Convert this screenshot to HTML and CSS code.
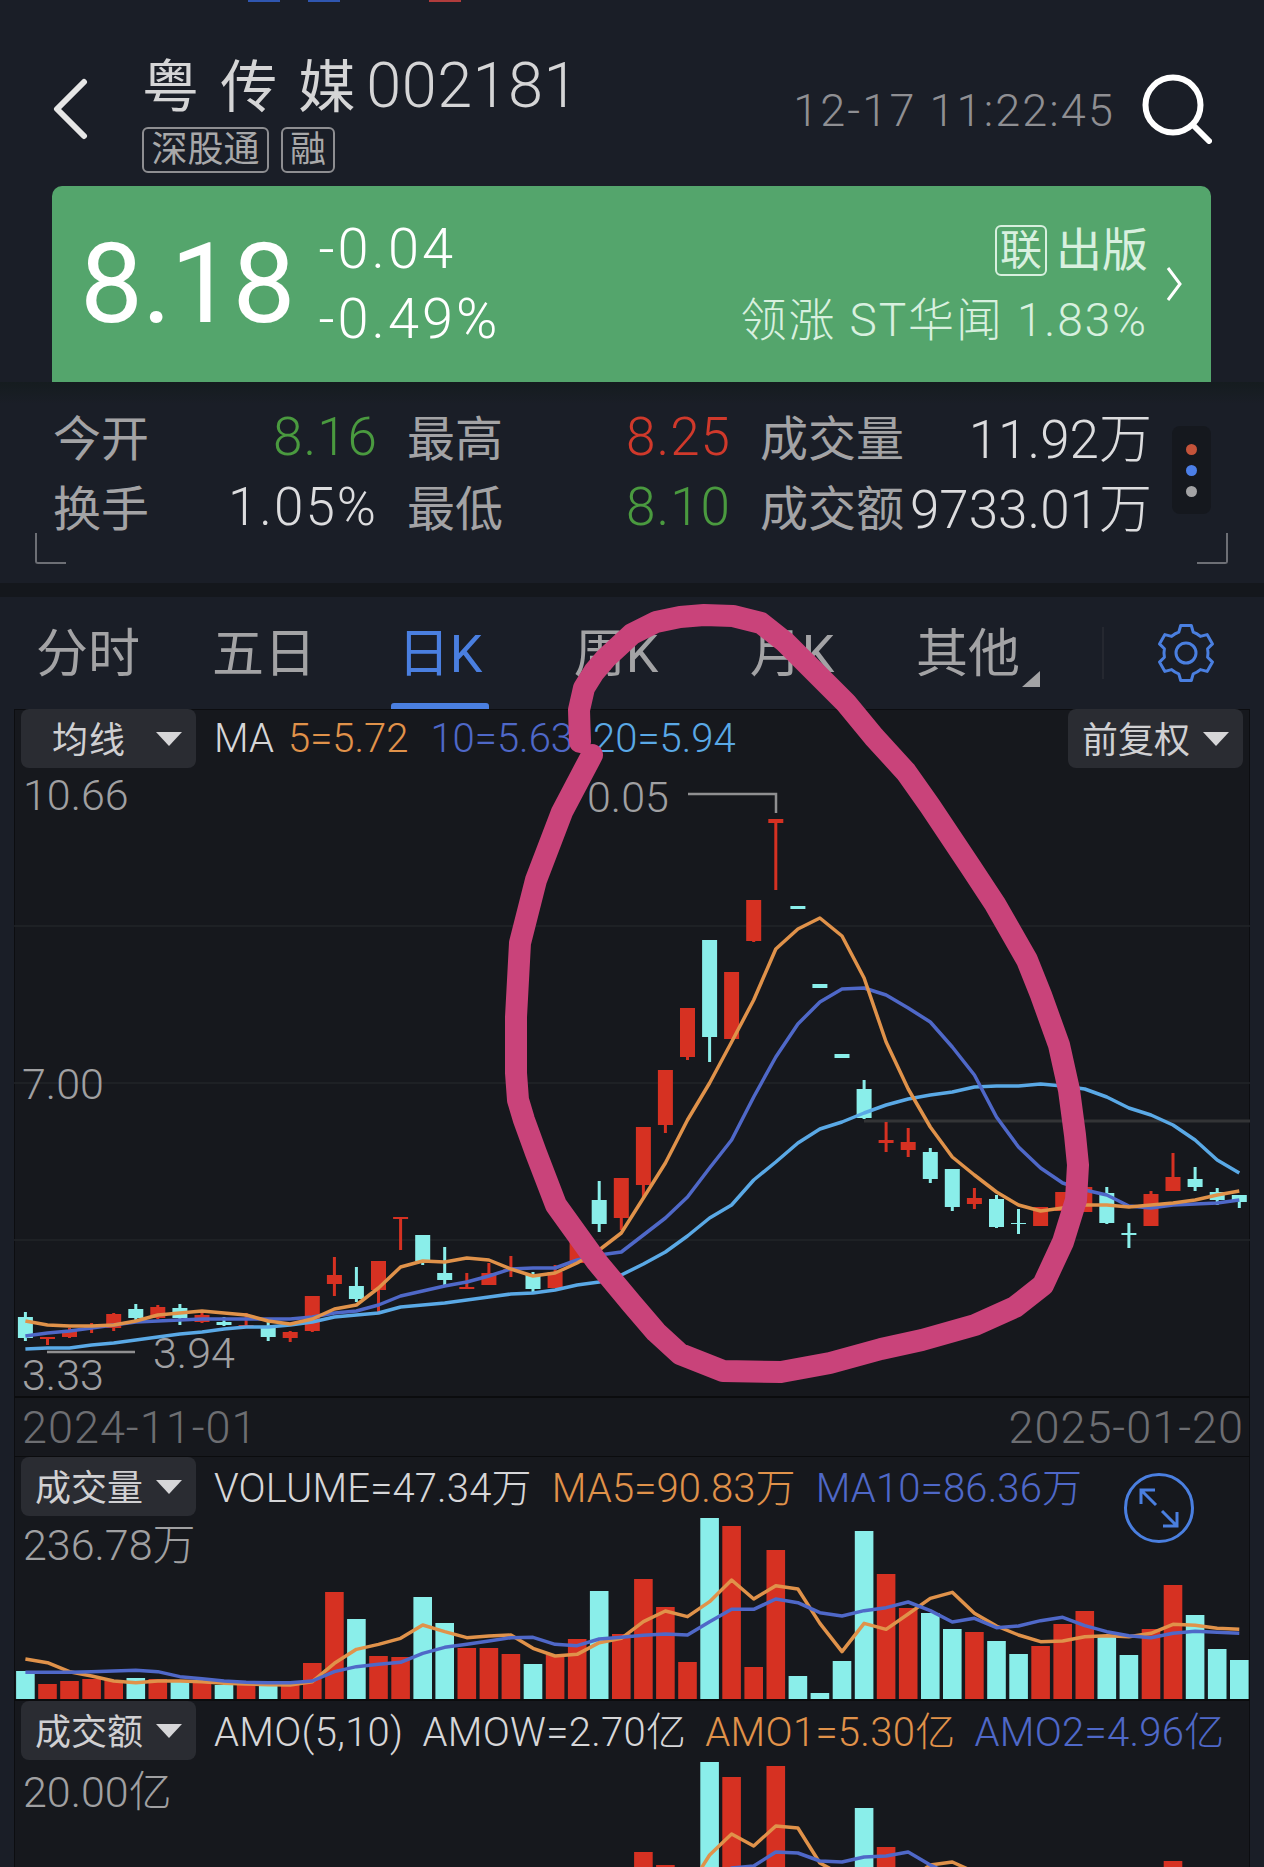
FILE: index.html
```html
<!DOCTYPE html>
<html lang="zh-CN">
<head>
    <meta charset="UTF-8">
    <meta name="viewport" content="width=device-width, initial-scale=1.0">
    <title>粤传媒 002181</title>
    <link rel="stylesheet" href="styles.css">
</head>
<body>
<div class="page">

    <div class="sliver">
        <span class="sliver-blue"></span>
        <span class="sliver-blue"></span>
        <span class="sliver-red"></span>
    </div>

    <header class="topbar">
        <svg class="back-icon" width="35" height="62" viewBox="0 0 35 62">
            <path d="M31 4 L4 31 L31 58"/>
        </svg>
        <div class="title-block">
            <h1 class="title">粤 传 媒<span class="code">002181</span></h1>
            <div class="tags">
                <span class="tag tag-wide">深股通</span>
                <span class="tag">融</span>
            </div>
        </div>
        <div class="time">12-17 11:22:45</div>
        <svg class="search-icon" width="70" height="70" viewBox="0 0 70 70">
            <circle cx="31" cy="31" r="27.5"/>
            <path d="M51 51 L67 67"/>
        </svg>
    </header>

    <section class="quote-card">
        <div class="price">8.18</div>
        <div class="change">
            <div>-0.04</div>
            <div>-0.49%</div>
        </div>
        <div class="sector">
            <div class="sector-name"><span class="sector-tag">联</span>出版</div>
            <div class="sector-lead">领涨 ST华闻 1.83%</div>
        </div>
        <svg class="card-arrow" width="16" height="34" viewBox="0 0 16 34">
            <path d="M2 1 L14 17 L2 33"/>
        </svg>
    </section>

    <section class="stats">
        <div class="stats-grid">
            <div class="stat"><span class="stat-label">今开</span><span class="stat-value green">8.16</span></div>
            <div class="stat"><span class="stat-label">最高</span><span class="stat-value red">8.25</span></div>
            <div class="stat"><span class="stat-label">成交量</span><span class="stat-value stat-cjk">11.92万</span></div>
            <div class="stat"><span class="stat-label">换手</span><span class="stat-value stat-wide">1.05%</span></div>
            <div class="stat"><span class="stat-label">最低</span><span class="stat-value green">8.10</span></div>
            <div class="stat"><span class="stat-label">成交额</span><span class="stat-value stat-cjk">9733.01万</span></div>
        </div>
        <div class="page-dots">
            <span class="dot dot-red"></span>
            <span class="dot dot-blue"></span>
            <span class="dot dot-gray"></span>
        </div>
        <span class="corner corner-left"></span>
        <span class="corner corner-right"></span>
    </section>

    <nav class="tabs">
        <a class="tab">分时</a>
        <a class="tab">五日</a>
        <a class="tab tab-active">日K</a>
        <a class="tab">周K</a>
        <a class="tab">月K</a>
        <a class="tab tab-more">其他</a>
        <span class="tabs-divider"></span>
        <svg class="gear-icon" width="60" height="60" viewBox="-30 -30 60 60">
            <path d="M-5.3 -27.5 L5.3 -27.5 L7.2 -20.8 A22 22 0 0 1 14.4 -16.6 L21.1 -18.4 L26.5 -9.1 L21.6 -4.2 A22 22 0 0 1 21.6 4.2 L26.5 9.1 L21.1 18.4 L14.4 16.6 A22 22 0 0 1 7.2 20.8 L5.3 27.5 L-5.3 27.5 L-7.2 20.8 A22 22 0 0 1 -14.4 16.6 L-21.1 18.4 L-26.5 9.1 L-21.6 4.2 A22 22 0 0 1 -21.6 -4.2 L-26.5 -9.1 L-21.1 -18.4 L-14.4 -16.6 A22 22 0 0 1 -7.2 -20.8 Z"/>
            <circle r="10"/>
        </svg>
    </nav>

    <main class="chart-panel">
        <!-- viewBox uses page coordinates so the values read straight off the screen -->
        <svg class="chart-canvas" width="1236" height="1158" viewBox="14 709 1236 1158">
            <g class="grid-lines">
                <line x1="14" x2="1250" y1="926" y2="926"/>
                <line x1="14" x2="1250" y1="1083" y2="1083"/>
                <line x1="14" x2="1250" y1="1240" y2="1240"/>
            </g>
            <line class="price-line" x1="864" x2="1250" y1="1121" y2="1121"/>
            <g id="volume-bars"></g>
            <g id="amount-bars"></g>
            <g id="candles"></g>
            <g id="ma-lines"></g>
            <path class="extreme-line" d="M688 794 H776 V813"/>
            <path class="extreme-line" d="M47 1352 H135"/>
            <text class="axis-label" x="23" y="810">10.66</text>
            <text class="axis-label" x="587" y="812">0.05</text>
            <text class="axis-label" x="22" y="1099">7.00</text>
            <text class="axis-label" x="153" y="1368">3.94</text>
            <text class="axis-label" x="22" y="1390">3.33</text>
            <text class="axis-label" x="23" y="1560">236.78万</text>
            <text class="axis-label" x="23" y="1807">20.00亿</text>
        </svg>

        <section class="kline-pane">
            <div class="tool-row">
                <div class="dropdown"><span class="dropdown-text dropdown-short">均线</span><i class="caret"></i></div>
                <div class="legend">
                    <span>MA</span>
                    <span class="c-orange">5=5.72</span>
                    <span class="c-blue gap-wide">10=5.63</span>
                    <span class="c-sky gap-last">20=5.94</span>
                </div>
                <div class="dropdown dropdown-right"><span class="dropdown-text">前复权</span><i class="caret"></i></div>
            </div>
        </section>

        <div class="date-row">
            <span>2024-11-01</span>
            <span>2025-01-20</span>
        </div>

        <section class="volume-pane">
            <div class="tool-row">
                <div class="dropdown"><span class="dropdown-text">成交量</span><i class="caret"></i></div>
                <div class="legend legend-wide">
                    <span>VOLUME=47.34万</span>
                    <span class="c-orange">MA5=90.83万</span>
                    <span class="c-blue">MA10=86.36万</span>
                </div>
                <svg class="expand-icon" width="72" height="72" viewBox="-36 -36 72 72">
                    <circle r="33.5"/>
                    <path d="M-18 -18 L-3 -3 M3 3 L18 18 M-18 -4 V-18 H-4 M18 4 V18 H4"/>
                </svg>
            </div>
        </section>

        <section class="amount-pane">
            <div class="tool-row">
                <div class="dropdown"><span class="dropdown-text">成交额</span><i class="caret"></i></div>
                <div class="legend legend-amo">
                    <span>AMO(5,10)</span>
                    <span>AMOW=2.70亿</span>
                    <span class="c-orange">AMO1=5.30亿</span>
                    <span class="c-blue">AMO2=4.96亿</span>
                </div>
            </div>
        </section>
    </main>

    <svg class="scribble" width="1264" height="1867" viewBox="0 0 1264 1867">
        <path d="M580 742 L579 710 L584 688 L594 672 L606 658 L632 634 L656 622 L680 617 L704 615 L733 616 L761 623 L785 642 L813 670 L846 703 L874 737 L906 772 L930 806 L970 866 L995 904 L1027 960 L1041 995 L1059 1045 L1069 1090 L1075 1135 L1078 1165 L1076 1200 L1063 1242 L1043 1285 L1015 1307 L975 1325 L922 1340 L881 1349 L830 1363 L781 1372 L723 1371 L680 1354 L656 1332 L632 1304 L597 1262 L556 1205 L536 1153 L524 1120 L518 1100 L516 1073 L516 1017 L520 943 L536 880 L562 812 L592 755"/>
    </svg>
</div>
<script src="script.js"></script>
</body>
</html>
```

FILE: styles.css
```css
* {
    box-sizing: border-box;
}
html, body {
    margin: 0;
    padding: 0;
}
body {
    background: #1a1e27;
    font-family: Roboto, "Noto Sans CJK SC", sans-serif;
    font-weight: 300;
    color: #dcdcde;
}
.page {
    position: relative;
    width: 1264px;
    height: 1867px;
    overflow: hidden;
}

/* top edge */
.sliver {
    display: flex;
    height: 2px;
    padding-left: 248px;
}
.sliver span {
    width: 32px;
    margin-right: 28px;
}
.sliver-blue {
    background: #2f56b0;
}
.sliver-red {
    margin-left: 61px;
    background: #b03c3c;
}

/* header */
.topbar {
    display: flex;
    align-items: flex-start;
    height: 184px;
}
.back-icon {
    margin: 76px 0 0 53px;
    flex: none;
}
.back-icon path {
    fill: none;
    stroke: #e6e6e6;
    stroke-width: 6;
    stroke-linecap: round;
    stroke-linejoin: round;
}
.title-block {
    margin-left: 54px;
}
.title {
    margin: 50px 0 0;
    height: 67px;
    line-height: 68px;
    font-size: 57px;
    font-weight: 400;
    word-spacing: 7px;
    color: #d5d5d6;
    white-space: nowrap;
}
.code {
    font-size: 63px;
    font-weight: 300;
    letter-spacing: 0.5px;
    margin-left: 11px;
}
.tags {
    display: flex;
    gap: 12px;
    margin-top: 8px;
}
.tag {
    display: block;
    width: 54px;
    height: 46px;
    line-height: 42px;
    font-size: 36px;
    font-weight: 400;
    text-align: center;
    color: #a8a8a9;
    border: 2px solid #8e8e91;
    border-radius: 6px;
}
.tag-wide {
    width: 127px;
}
.time {
    margin: 82px 0 0 auto;
    line-height: 54px;
    font-size: 45px;
    letter-spacing: 2.1px;
    color: #8f8f93;
}
.search-icon {
    flex: none;
    margin: 72px 52px 0 27px;
}
.search-icon circle, .search-icon path {
    fill: none;
    stroke: #fff;
    stroke-width: 6;
    stroke-linecap: round;
}

/* green quote card */
.quote-card {
    display: flex;
    align-items: center;
    height: 196px;
    margin: 0 53px 0 52px;
    padding: 0 29px 0 28px;
    background: #54a56c;
    border-radius: 10px 10px 0 0;
    color: #fff;
}
.price {
    font-size: 112px;
    letter-spacing: -1px;
    line-height: 1;
    font-weight: 400;
}
.change {
    margin-left: 24px;
    font-size: 56px;
    letter-spacing: 3px;
    line-height: 70px;
}
.sector {
    margin-left: auto;
    text-align: right;
    font-size: 46px;
    font-weight: 400;
    line-height: 70px;
    color: #d8f0df;
    padding-top: 2px;
}
.sector-name {
    display: flex;
    justify-content: flex-end;
    align-items: center;
}
.sector-lead {
    letter-spacing: 1.9px;
    font-weight: 300;
}
.sector-tag {
    width: 52px;
    height: 51px;
    line-height: 47px;
    margin-right: 9px;
    font-size: 42px;
    text-align: center;
    border: 2px solid #d8f0df;
    border-radius: 6px;
}
.card-arrow {
    flex: none;
    margin-left: 18px;
}
.card-arrow path {
    fill: none;
    stroke: #fff;
    stroke-width: 3;
}

/* stats */
.stats {
    position: relative;
    display: flex;
    align-items: flex-start;
    height: 201px;
    padding: 20px 0 0 53px;
    background: linear-gradient(#151c1f, #1a1e27 22px);
}
.stats-grid {
    display: grid;
    grid-template-columns: 325px 324px 392px;
    grid-auto-rows: 70px;
    column-gap: 29px;
}
.stat {
    display: flex;
    align-items: center;
    justify-content: space-between;
}
.stat-label {
    font-size: 48px;
    font-weight: 400;
    color: #a3a3a5;
    margin-top: -4px;
}
.stat-value {
    font-size: 53px;
    letter-spacing: 1px;
    color: #dcdcde;
}
.stat-cjk {
    letter-spacing: 0;
    margin-top: -5px;
}
.stat-wide {
    letter-spacing: 2px;
}
.stat .green {
    color: #4a9a3f;
}
.stat .red {
    color: #d0392b;
}
.page-dots {
    display: flex;
    flex-direction: column;
    align-items: center;
    justify-content: center;
    gap: 10px;
    width: 39px;
    height: 88px;
    margin: 24px 0 0 20px;
    background: #15181e;
    border-radius: 8px;
}
.dot {
    width: 11px;
    height: 11px;
    border-radius: 50%;
}
.dot-red {
    background: #c4533a;
}
.dot-blue {
    background: #4c7fe8;
}
.dot-gray {
    background: #a3a3a5;
}
.corner {
    position: absolute;
    top: 151px;
    width: 31px;
    height: 31px;
    border-bottom: 2px solid #6d6f75;
}
.corner-left {
    left: 35px;
    border-left: 2px solid #6d6f75;
    border-bottom-left-radius: 3px;
}
.corner-right {
    left: 1197px;
    border-right: 2px solid #6d6f75;
    border-bottom-right-radius: 3px;
}

/* tabs */
.tabs {
    display: flex;
    align-items: center;
    height: 126px;
    border-top: 14px solid #14171c;
}
.tab {
    position: relative;
    width: 176px;
    height: 112px;
    line-height: 116px;
    text-align: center;
    font-size: 52px;
    font-weight: 400;
    color: #a3a3a5;
}
.tab-active {
    color: #4a7fe0;
}
.tab-active::after {
    content: "";
    position: absolute;
    left: 39px;
    bottom: 0;
    width: 98px;
    height: 6px;
    border-radius: 3px 3px 0 0;
    background: #4a7fe0;
}
.tab-more::after {
    content: "";
    position: absolute;
    left: 142px;
    bottom: 22px;
    border-style: solid;
    border-width: 0 0 16px 18px;
    border-color: transparent transparent #a3a3a5 transparent;
}
.tabs-divider {
    width: 2px;
    height: 52px;
    margin-left: 46px;
    background: #252830;
}
.gear-icon {
    flex: none;
    margin-left: 52px;
}
.gear-icon path, .gear-icon circle {
    fill: none;
    stroke: #4a7fe0;
    stroke-width: 3;
    stroke-linejoin: round;
}

/* chart panel */
.chart-panel {
    position: relative;
    width: 1236px;
    height: 1158px;
    margin-left: 14px;
    background: #16181d;
    box-shadow: inset 1px 0 #0c0d10, inset -1px 0 #0c0d10, inset 0 1px #0c0d10;
}
.chart-canvas {
    position: absolute;
    left: 0;
    top: 0;
}
.grid-lines line {
    stroke: #222429;
    stroke-width: 1.5;
}
.price-line {
    stroke: #333436;
    stroke-width: 3;
}
.extreme-line {
    fill: none;
    stroke: #8f8f91;
    stroke-width: 2.5;
}
.axis-label {
    font-size: 43px;
    fill: #a0a0a2;
}
.up {
    fill: #d63122;
}
.down {
    fill: #8aeeea;
}
.ma {
    fill: none;
    stroke-width: 3.5;
    stroke-linejoin: round;
}
.ma-orange {
    stroke: #e0924a;
}
.ma-blue {
    stroke: #4f68c8;
}
.ma-sky {
    stroke: #5aa9e6;
}
.kline-pane, .date-row, .volume-pane, .amount-pane {
    position: relative;
}
.kline-pane {
    height: 689px;
    border-bottom: 2px solid #0b0c0e;
}
.date-row {
    display: flex;
    justify-content: space-between;
    align-items: center;
    height: 59px;
    padding: 0 6px 0 8px;
    font-size: 45px;
    letter-spacing: 1px;
    color: #6d6e72;
    border-bottom: 1px solid #0b0c0e;
}
.volume-pane {
    height: 244px;
    border-bottom: 2px solid #0b0c0e;
}
.amount-pane {
    height: 166px;
}
.tool-row {
    display: flex;
    align-items: center;
    height: 59px;
    padding-left: 7px;
}
.dropdown {
    display: flex;
    align-items: center;
    flex: none;
    width: 175px;
    height: 59px;
    padding-left: 14px;
    background: #2a2c32;
    border-radius: 8px;
}
.dropdown-text {
    font-size: 36px;
    font-weight: 400;
    color: #d0d0d2;
    white-space: nowrap;
    margin-top: -4px;
}
.dropdown-short {
    padding-left: 17px;
    letter-spacing: 1px;
}
.caret {
    margin-left: auto;
    margin-right: 14px;
    border-style: solid;
    border-width: 14px 13px 0;
    border-color: #d6d6d8 transparent transparent;
}
.dropdown-right {
    margin-left: auto;
    margin-right: 7px;
}
.legend {
    display: flex;
    align-items: baseline;
    gap: 14px;
    margin-left: 18px;
    font-size: 40px;
    color: #d6d6d8;
    white-space: nowrap;
}
.legend-wide {
    gap: 20px;
    letter-spacing: 0.15px;
    margin-top: -3px;
}
.legend-amo {
    gap: 19px;
    letter-spacing: 0.3px;
    margin-top: -4px;
}
.gap-wide {
    margin-left: 8px;
}
.gap-last {
    margin-left: 6px;
}
.c-orange {
    color: #e0924a;
}
.c-blue {
    color: #4f68c8;
}
.c-sky {
    color: #5aa9e6;
}
.expand-icon {
    flex: none;
    align-self: flex-start;
    margin: 15px 55px 0 auto;
}
.expand-icon circle, .expand-icon path {
    fill: none;
    stroke: #4a7fe0;
    stroke-width: 3;
}

/* hand drawn mark over the whole screenshot */
.scribble {
    position: absolute;
    left: 0;
    top: 0;
    pointer-events: none;
}
.scribble path {
    fill: none;
    stroke: #c9437a;
    stroke-width: 22;
    stroke-linecap: round;
    stroke-linejoin: round;
}
```

FILE: script.js
```js
// x of the first candle and the distance between candles
var START_X = 25.4;
var STEP = 22.07;
var BAR_W = 18.6;
var BODY_W = 15;
var WICK_W = 3;

// u = red, d = cyan: [type, bodyTop, bodyBottom, wickTop, wickBottom]
var candles = [
    ["d",1317,1338,1312,1341],["u",1337,1339,1337,1345],["u",1330,1337,1328,1338],["u",1326,1328,1323,1333],
    ["u",1314,1328,1313,1331],["d",1309,1318,1304,1320],["u",1307,1318,1305,1319],["d",1308,1318,1304,1325],
    ["u",1315,1322,1310,1323],["d",1322,1325,1317,1326],["u",1325,1326,1313,1326],["d",1327,1337,1322,1341],
    ["u",1332,1338,1331,1342],["u",1296,1331,1296,1332],["u",1275,1284,1257,1296],["d",1286,1299,1267,1302],
    ["u",1261,1290,1261,1312],["u",1217,1219,1217,1250],["d",1235,1261,1235,1265],["d",1273,1280,1247,1285],
    ["u",1287,1289,1273,1289],["u",1273,1285,1263,1285],["u",1269,1271,1256,1277],["d",1275,1289,1272,1292],
    ["u",1272,1288,1265,1288],["u",1242,1263,1242,1263],["d",1200,1224,1181,1232],["u",1178,1218,1178,1230],
    ["u",1127,1185,1127,1197],["u",1070,1125,1070,1133],["u",1008,1057,1008,1060],["d",940,1037,940,1062],
    ["u",972,1039,972,1039],["u",900,941,900,942],["u",819,823,819,890],["d",906,909,906,909],
    ["d",984,988,984,988],["d",1054,1058,1054,1058],["d",1089,1118,1080,1119],["u",1140,1143,1122,1152],
    ["u",1142,1150,1128,1157],["d",1152,1179,1148,1183],["d",1169,1207,1169,1211],["u",1198,1204,1188,1209],
    ["d",1199,1227,1195,1228],["d",1223,1224,1209,1234],["u",1207,1226,1207,1226],["u",1192,1211,1192,1211],
    ["u",1187,1212,1187,1212],["d",1193,1223,1187,1224],["d",1233,1235,1223,1248],["u",1194,1226,1191,1226],
    ["u",1177,1191,1153,1191],["d",1179,1187,1167,1191],["d",1192,1200,1188,1205],["d",1195,1202,1195,1208]
];

var ma5 = [1321,1325,1326,1326,1325,1321,1315,1313,1311,1313,1315,1321,1324,1319,1309,1305,1288,1267,1261,1262,
    1258,1260,1269,1276,1273,1263,1250,1233,1198,1163,1120,1083,1042,1000,949,929,918,936,978,1042,
    1089,1127,1157,1175,1192,1205,1211,1208,1205,1205,1207,1205,1203,1200,1195,1191];
var ma10 = [1336,1333,1331,1328,1325,1322,1321,1320,1319,1319,1319,1319,1319,1317,1313,1311,1305,1296,1291,1286,
    1282,1276,1269,1268,1268,1260,1255,1252,1235,1218,1197,1168,1140,1097,1057,1024,1002,989,988,995,
    1008,1022,1047,1075,1117,1147,1168,1183,1190,1195,1206,1208,1205,1204,1203,1200];
var ma20 = [1349,1348,1348,1345,1343,1340,1337,1334,1332,1329,1327,1327,1325,1322,1317,1315,1313,1307,1305,1303,
    1300,1297,1294,1293,1290,1285,1282,1275,1264,1252,1236,1218,1205,1180,1162,1143,1129,1122,1113,1105,
    1099,1095,1092,1087,1086,1086,1084,1086,1089,1097,1108,1115,1125,1140,1160,1173];

// volume pane: bar tops, the bottom is always 1699
var volume = [1671,1684,1681,1679,1680,1678,1679,1682,1683,1685,1684,1685,1684,1663,1592,1619,1656,1657,1597,1623,
    1648,1648,1654,1664,1655,1639,1591,1634,1579,1607,1662,1518,1526,1667,1550,1676,1693,1661,1531,1574,
    1608,1613,1629,1632,1641,1654,1646,1624,1611,1635,1655,1629,1585,1615,1649,1660];
var volMa5 = [357,368,395,408,423,428,423,423,425,430,432,434,435,425,370,328,313,295,255,275,293,288,285,325,348,
    343,308,295,245,213,230,185,120,177,137,147,250,335,250,268,222,175,157,220,258,285,305,303,290,287,290,280,
    253,256,265,268];
var volMa10 = [397,397,397,395,393,391,395,410,416,423,427,428,428,423,395,380,373,367,340,322,313,303,293,292,313,
    317,297,292,286,282,285,245,208,208,177,188,218,228,212,203,186,212,246,235,263,258,242,232,257,275,287,293,
    280,274,277,280];

// amount pane is cut off by the bottom of the screen, only the tall bars show
var amount = { 28: 1852, 29: 1865, 31: 1762, 32: 1777, 34: 1766, 38: 1808, 39: 1847, 52: 1861 };
var amoMa5 = [[30,1890],[31,1855],[32,1834],[33,1846],[34,1826],[35,1828],[36,1863],[37,1875]];
var amoMa5b = [[40,1880],[41,1865],[42,1862],[43,1872]];
var amoMa10 = [[31,1880],[32,1868],[33,1866],[34,1852],[35,1853],[36,1861],[37,1862],[38,1857],[39,1856],[40,1852],[41,1865],[42,1875]];

function cx(i) {
    return START_X + STEP * i;
}

function rect(x, y, w, h, cls) {
    return '<rect x="' + x.toFixed(1) + '" y="' + y + '" width="' + w + '" height="' + h + '" class="' + cls + '"/>';
}

function polyline(points, cls) {
    var pts = points.map(function (p) { return cx(p[0]).toFixed(1) + "," + p[1]; }).join(" ");
    return '<polyline class="ma ' + cls + '" points="' + pts + '"/>';
}

function series(values, toY) {
    return values.map(function (v, i) { return [i, toY ? toY(v) : v]; });
}

function volY(v) {
    return 1540 + v / 3;
}

var candleHtml = "";
candles.forEach(function (c, i) {
    var cls = c[0] === "u" ? "up" : "down";
    candleHtml += rect(cx(i) - WICK_W / 2, c[3], WICK_W, c[4] - c[3], cls);
    candleHtml += rect(cx(i) - BODY_W / 2, c[1], BODY_W, c[2] - c[1], cls);
});
document.getElementById("candles").innerHTML = candleHtml;

var volHtml = "";
volume.forEach(function (top, i) {
    volHtml += rect(cx(i) - BAR_W / 2, top, BAR_W, 1699 - top, candles[i][0] === "u" ? "up" : "down");
});
document.getElementById("volume-bars").innerHTML = volHtml;

var amoHtml = "";
Object.keys(amount).forEach(function (k) {
    var i = Number(k);
    amoHtml += rect(cx(i) - BAR_W / 2, amount[k], BAR_W, 1867 - amount[k], candles[i][0] === "u" ? "up" : "down");
});
document.getElementById("amount-bars").innerHTML = amoHtml;

document.getElementById("ma-lines").innerHTML =
    polyline(series(ma20), "ma-sky") +
    polyline(series(ma10), "ma-blue") +
    polyline(series(ma5), "ma-orange") +
    polyline(series(volMa5, volY), "ma-orange") +
    polyline(series(volMa10, volY), "ma-blue") +
    polyline(amoMa5, "ma-orange") +
    polyline(amoMa5b, "ma-orange") +
    polyline(amoMa10, "ma-blue");
```
